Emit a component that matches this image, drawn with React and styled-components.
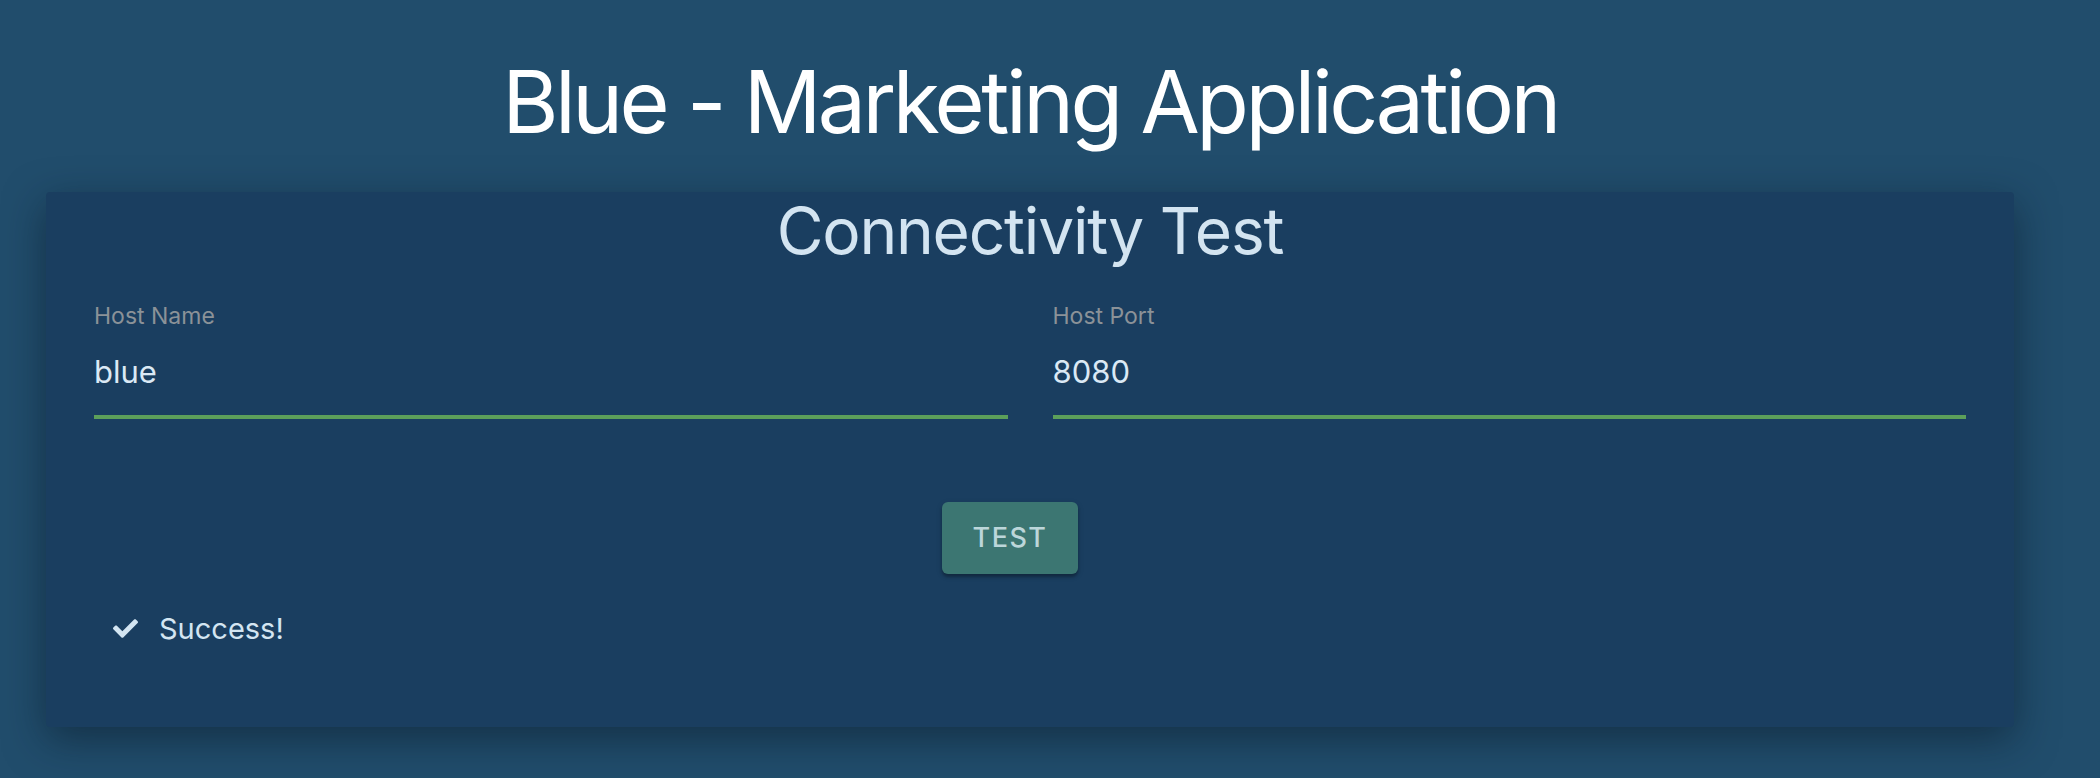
import React from 'react'
import styled, { createGlobalStyle } from 'styled-components'
import { FaCheck } from 'react-icons/fa'

const GlobalStyle = createGlobalStyle`
  html, body {
    margin: 0;
    padding: 0;
    background-color: #214d6c;
  }
  body {
    font-family: Inter, 'Liberation Sans', Arial, sans-serif;
  }
`

const Page = styled.div`
  min-height: 100vh;
  box-sizing: border-box;
  padding: 0 86px 40px 46px;
  background-color: #214d6c;
`

const Title = styled.h1`
  margin: 0;
  padding-top: 51px;
  height: 192px;
  box-sizing: border-box;
  text-align: center;
  font-size: 86px;
  font-weight: 400;
  line-height: 1.2;
  letter-spacing: -3.5px;
  color: #ffffff;
`

const Card = styled.div`
  background-color: #1a3e60;
  border-radius: 4px;
  box-shadow: 0 12px 40px rgba(10, 25, 40, 0.55);
  padding: 0 48px;
  height: 535px;
  box-sizing: border-box;
`

const CardTitle = styled.h2`
  margin: 0;
  padding-top: 1px;
  text-align: center;
  font-size: 64px;
  font-weight: 400;
  line-height: 1.2;
  letter-spacing: -1.2px;
  color: #d3e4f1;
`

const Fields = styled.div`
  display: grid;
  grid-template-columns: 1fr 1fr;
  column-gap: 45px;
  margin-top: 32px;
`

const Field = styled.div`
  display: flex;
  flex-direction: column;
  border-bottom: 4px solid #5c9f5a;
  padding-bottom: 23px;
`

const Label = styled.label`
  font-size: 23px;
  line-height: 28px;
  color: #8b9298;
`

const Value = styled.div`
  margin-top: 22px;
  font-size: 31px;
  line-height: 40px;
  color: #dbe9f5;
`

const ButtonRow = styled.div`
  display: flex;
  justify-content: center;
  padding-right: 40px;
  margin-top: 83px;
`

const Button = styled.button`
  width: 136px;
  height: 72px;
  border: none;
  border-radius: 6px;
  background-color: #3c7672;
  color: #bcd6da;
  font-family: Inter, 'Liberation Sans', Arial, sans-serif;
  font-size: 27px;
  font-weight: 500;
  letter-spacing: 1.5px;
  text-transform: uppercase;
  box-shadow: 0 3px 3px rgba(0, 0, 0, 0.25), 0 2px 6px rgba(0, 0, 0, 0.15);
  cursor: pointer;
`

const Status = styled.div`
  display: flex;
  align-items: center;
  gap: 21px;
  margin-top: 37px;
  padding-left: 19px;
  font-size: 29px;
  color: #d3e5f2;

  svg {
    width: 25px;
    height: 25px;
  }
`

const App = () => {
  return (
    <Page>
      <GlobalStyle />
      <Title>Blue - Marketing Application</Title>
      <Card>
        <CardTitle>Connectivity Test</CardTitle>
        <Fields>
          <Field>
            <Label>Host Name</Label>
            <Value>blue</Value>
          </Field>
          <Field>
            <Label>Host Port</Label>
            <Value>8080</Value>
          </Field>
        </Fields>
        <ButtonRow>
          <Button>Test</Button>
        </ButtonRow>
        <Status>
          <FaCheck />
          <span>Success!</span>
        </Status>
      </Card>
    </Page>
  )
}

export default App
